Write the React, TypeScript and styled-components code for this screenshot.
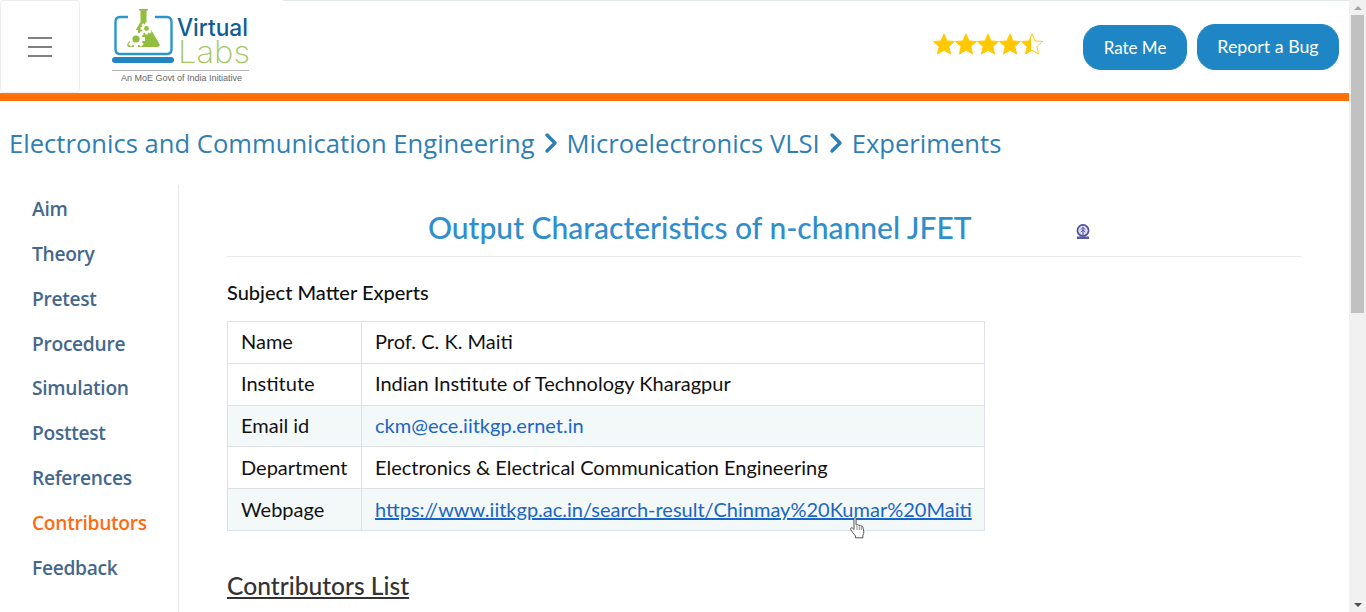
import React from 'react';
import styled, { createGlobalStyle } from 'styled-components';
import { ChevronRight } from 'lucide-react';

const GlobalStyle = createGlobalStyle`
  html, body {
    margin: 0;
    padding: 0;
    height: 100%;
    overflow: hidden;
    background: #fff;
  }
  * {
    box-sizing: border-box;
  }
`;

const sideItems = ['Aim', 'Theory', 'Pretest', 'Procedure', 'Simulation', 'Posttest', 'References', 'Contributors', 'Feedback'];

const Star = ({ id, fill }: { id: string; fill: number }) => (
  <svg width="22" height="22" viewBox="0 0 24 24">
    <defs>
      <linearGradient id={id}>
        <stop offset={`${fill * 100}%`} stopColor="#ffc800" />
        <stop offset={`${fill * 100}%`} stopColor="#fff" />
      </linearGradient>
    </defs>
    <polygon
      points="12,1 15.3,8.6 23.5,9.3 17.3,14.8 19.2,23 12,18.7 4.8,23 6.7,14.8 .5,9.3 8.7,8.6"
      fill={`url(#${id})`}
      stroke="#ffc800"
      strokeWidth="1"
    />
  </svg>
);

const Gear = ({ cx, cy, r }: { cx: number; cy: number; r: number }) => (
  <g>
    {[0, 45, 90, 135].map((a) => (
      <rect
        key={a}
        x={cx - r * 0.22}
        y={cy - r}
        width={r * 0.44}
        height={r * 2}
        fill="#fff"
        transform={`rotate(${a} ${cx} ${cy})`}
      />
    ))}
    <circle cx={cx} cy={cy} r={r * 0.76} fill="#fff" />
    <circle cx={cx} cy={cy} r={r * 0.4} fill="#93bd3c" />
  </g>
);

const Logo = () => (
  <svg width="146" height="80" viewBox="110 6 146 80">
    <path d="M128 17 H120 Q115.500 17 115.500 22 V49 Q115.500 54 120 54 H167 Q171.500 54 171.500 49 V22 Q171.500 17 167 17 H155" fill="none" stroke="#2b95cf" strokeWidth="2.400" />
    <rect x="112" y="57" width="62" height="6" rx="3" fill="#2285c2" />
    <path d="M139 9 H148 V10.500 H146.500 V22 L159.500 44 Q160.500 47 157 47 H130 Q126 47 127.500 44 L140.500 22 V10.500 H139 Z" fill="#93bd3c" />
    <Gear cx={136} cy={39} r={9} />
    <Gear cx={146.500} cy={28.500} r={6} />
    <text x="177" y="35.500" fontFamily="Inter, sans-serif" fontWeight="500" fontSize="24" fill="#0f5f94" textLength="71" lengthAdjust="spacingAndGlyphs">Virtual</text>
    <text x="178" y="62.500" fontFamily="Inter, sans-serif" fontWeight="200" fontSize="31" fill="#a5c663" textLength="72" lengthAdjust="spacingAndGlyphs">Labs</text>
    <rect x="112" y="70" width="137" height="1" fill="#b5b5b5" />
    <text x="121" y="81" fontFamily="'Liberation Sans', sans-serif" fontSize="9" fill="#666" textLength="121">An MoE Govt of India Initiative</text>
  </svg>
);

const InstituteMark = () => (
  <svg width="14" height="16" viewBox="0 0 14 16">
    <circle cx="7" cy="6.500" r="5.600" fill="#dcdcf0" stroke="#4f4f9e" strokeWidth="1.700" />
    <path d="M7 3 V11 M5 5.500 L7 3.500 L9 5.500 M4.800 8 L7 6 L9.200 8" fill="none" stroke="#4f4f9e" strokeWidth="1" />
    <rect x="1" y="12.500" width="12" height="2.500" fill="#5a5aa5" />
  </svg>
);

const HandCursor = () => (
  <svg width="17" height="22" viewBox="0 0 16 22">
    <path
      d="M4.500 1.800 Q4.500 .7 5.500 .7 Q6.600 .7 6.600 1.800 V8 L7.200 8 Q8.500 7.200 9.300 8.400 Q10.700 7.800 11.300 9.100 Q12.900 8.700 13.400 10.200 L14.300 14.800 Q14.400 16.500 13.400 18.200 V20.800 H6 V19 Q3.500 16 1.300 12.800 Q.5 11.300 1.700 10.800 Q2.900 10.500 4.500 12.500 Z"
      fill="#fff"
      stroke="#555"
      strokeWidth="1"
      strokeLinejoin="round"
    />
    <path d="M7.500 9 V13 M9.800 9 V13 M11.800 10 V13" stroke="#777" strokeWidth=".8" fill="none" />
  </svg>
);

const App = () => {
  return (
    <Viewport>
      <GlobalStyle />
      <Page>
        <Header>
          <Toggler aria-label="menu">
            <Bars>
              <span />
              <span />
              <span />
            </Bars>
          </Toggler>
          <Brand>
            <Logo />
          </Brand>
          <Actions>
            <Stars>
              <Star id="s1" fill={1} />
              <Star id="s2" fill={1} />
              <Star id="s3" fill={1} />
              <Star id="s4" fill={1} />
              <Star id="s5" fill={0.45} />
            </Stars>
            <RateButton>Rate Me</RateButton>
            <BugButton>Report a Bug</BugButton>
          </Actions>
        </Header>
        <OrangeBar />

        <Breadcrumb>
          <span>Electronics and Communication Engineering</span>
          <ChevronRight size={32} strokeWidth={2.6} />
          <span>Microelectronics VLSI</span>
          <ChevronRight size={32} strokeWidth={2.6} />
          <span>Experiments</span>
        </Breadcrumb>

        <Body>
          <Sidebar>
            {sideItems.map((item) => (
              <SideLink key={item} $active={item === 'Contributors'}>
                {item}
              </SideLink>
            ))}
          </Sidebar>

          <Content>
            <TitleRow>
              <Title>Output Characteristics of n-channel JFET</Title>
              <MarkSlot>
                <InstituteMark />
              </MarkSlot>
            </TitleRow>
            <SubHead>Subject Matter Experts</SubHead>
            <TableWrap>
              <Table>
                <tbody>
                  <tr>
                    <LabelCell>Name</LabelCell>
                    <ValueCell>Prof. C. K. Maiti</ValueCell>
                  </tr>
                  <tr>
                    <LabelCell>Institute</LabelCell>
                    <ValueCell>Indian Institute of Technology Kharagpur</ValueCell>
                  </tr>
                  <StripedRow>
                    <LabelCell>Email id</LabelCell>
                    <ValueCell>
                      <MailLink>ckm@ece.iitkgp.ernet.in</MailLink>
                    </ValueCell>
                  </StripedRow>
                  <tr>
                    <LabelCell>Department</LabelCell>
                    <ValueCell>Electronics &amp; Electrical Communication Engineering</ValueCell>
                  </tr>
                  <StripedRow>
                    <LabelCell>Webpage</LabelCell>
                    <ValueCell>
                      <WebLink>https://www.iitkgp.ac.in/search-result/Chinmay%20Kumar%20Maiti</WebLink>
                    </ValueCell>
                  </StripedRow>
                </tbody>
              </Table>
              <Cursor>
                <HandCursor />
              </Cursor>
            </TableWrap>
            <ListHeading>Contributors List</ListHeading>
          </Content>
        </Body>
      </Page>

      <Scrollbar>
        <ArrowUp />
        <Thumb />
        <TrackRest />
        <ArrowDown />
      </Scrollbar>
    </Viewport>
  );
};

const Viewport = styled.div`
  display: flex;
  width: 1366px;
  height: 612px;
  overflow: hidden;
  font-family: Lato, 'Open Sans', sans-serif;
  color: #111;
`;

const Page = styled.div`
  width: 1349px;
  height: 612px;
  overflow: hidden;
  background: #fff;
`;

const Header = styled.header`
  display: flex;
  height: 93px;
`;

const Toggler = styled.button`
  display: flex;
  align-items: center;
  justify-content: center;
  width: 80px;
  height: 93px;
  padding: 0;
  background: #fff;
  border: 1px solid #ececec;
  border-radius: 4px;
`;

const Bars = styled.div`
  display: flex;
  flex-direction: column;
  gap: 7px;
  span {
    display: block;
    width: 24px;
    height: 2px;
    background: #808080;
  }
`;

const Brand = styled.div`
  width: 203px;
  padding: 6px 0 0 30px;
`;

const Actions = styled.div`
  flex: 1;
  display: flex;
  align-items: flex-start;
  border-top: 1px solid #e2e8ea;
  padding: 23px 10px 0 0;
  justify-content: flex-end;
`;

const Stars = styled.div`
  display: flex;
  margin: 9px 40px 0 0;
`;

const PillButton = styled.button`
  background: #1f86c6;
  color: #fff;
  border: 1px solid #1f86c6;
  border-radius: 18px;
  font-family: Lato, sans-serif;
  padding: 0;
`;

const RateButton = styled(PillButton)`
  width: 104px;
  height: 45px;
  margin-top: 1px;
  font-size: 17px;
`;

const BugButton = styled(PillButton)`
  width: 142px;
  height: 46px;
  margin-left: 10px;
  padding-bottom: 3px;
  font-size: 17.8px;
`;

const OrangeBar = styled.div`
  height: 8px;
  background: #ff6f0a;
  border-top: 1px solid #ff7a12;
`;

const Breadcrumb = styled.nav`
  display: flex;
  align-items: center;
  height: 84px;
  padding: 0 0 0 9px;
  font-family: 'Open Sans', sans-serif;
  font-size: 25.6px;
  color: #2f7fb5;
  svg {
    color: #2f7fb5;
  }
`;

const Body = styled.div`
  display: flex;
`;

const Sidebar = styled.aside`
  width: 179px;
  height: 427px;
  padding: 2px 0 0 32px;
  border-right: 1px solid #e6e6e6;
`;

const SideLink = styled.div<{ $active?: boolean }>`
  height: 44.85px;
  line-height: 44px;
  font-family: 'Open Sans', sans-serif;
  font-size: 19.2px;
  letter-spacing: -0.3px;
  font-weight: 600;
  color: ${(p) => (p.$active ? '#ff6a13' : '#44688c')};
`;

const Content = styled.main`
  width: 1122px;
  padding: 0 0 0 48px;
`;

const TitleRow = styled.div`
  display: flex;
  align-items: center;
  width: 1074px;
  height: 72px;
  border-bottom: 1px solid #e8e8e8;
  padding: 22px 0 10px 201px;
`;

const Title = styled.h1`
  margin: 0;
  font-family: Lato, sans-serif;
  font-size: 30px;
  font-weight: 500;
  color: #2f8ecb;
  white-space: nowrap;
`;

const MarkSlot = styled.div`
  display: flex;
  margin: 11px 0 0 auto;
  padding-right: 211px;
`;

const SubHead = styled.p`
  margin: 22px 0 16px;
  height: 26px;
  line-height: 26px;
  font-size: 20px;
  font-weight: 500;
`;

const TableWrap = styled.div`
  position: relative;
  width: 758px;
`;

const Table = styled.table`
  width: 758px;
  table-layout: fixed;
  border-collapse: collapse;
  font-size: 20px;
`;

const LabelCell = styled.td`
  width: 134px;
  height: 41.8px;
  padding: 0 0 2px 13px;
  border: 1px solid #dee2e6;
  white-space: nowrap;
`;

const ValueCell = styled.td`
  padding: 0 0 2px 13px;
  border: 1px solid #dee2e6;
  white-space: nowrap;
`;

const StripedRow = styled.tr`
  background: #f3f8f9;
`;

const MailLink = styled.a`
  color: #1a66c4;
`;

const WebLink = styled.a`
  color: #1a66c4;
  text-decoration: underline;
`;

const Cursor = styled.div`
  position: absolute;
  left: 622px;
  top: 196px;
  display: flex;
`;

const ListHeading = styled.h2`
  margin: 40px 0 0;
  font-size: 24.6px;
  font-weight: 500;
  color: #333;
  text-decoration: underline;
  line-height: 30px;
`;

const Scrollbar = styled.div`
  display: flex;
  flex-direction: column;
  width: 17px;
  height: 612px;
  background: #f1f1f1;
`;

const ArrowUp = styled.div`
  height: 15px;
  display: flex;
  justify-content: center;
  align-items: center;
  &::before {
    content: '';
    border-left: 4px solid transparent;
    border-right: 4px solid transparent;
    border-bottom: 4px solid #a3a3a3;
  }
`;

const ArrowDown = styled(ArrowUp)`
  &::before {
    border-bottom: 0;
    border-top: 4px solid #505050;
  }
`;

const Thumb = styled.div`
  height: 298px;
  margin: 0 2px;
  background: #c1c1c1;
`;

const TrackRest = styled.div`
  flex: 1;
`;

export default App;
